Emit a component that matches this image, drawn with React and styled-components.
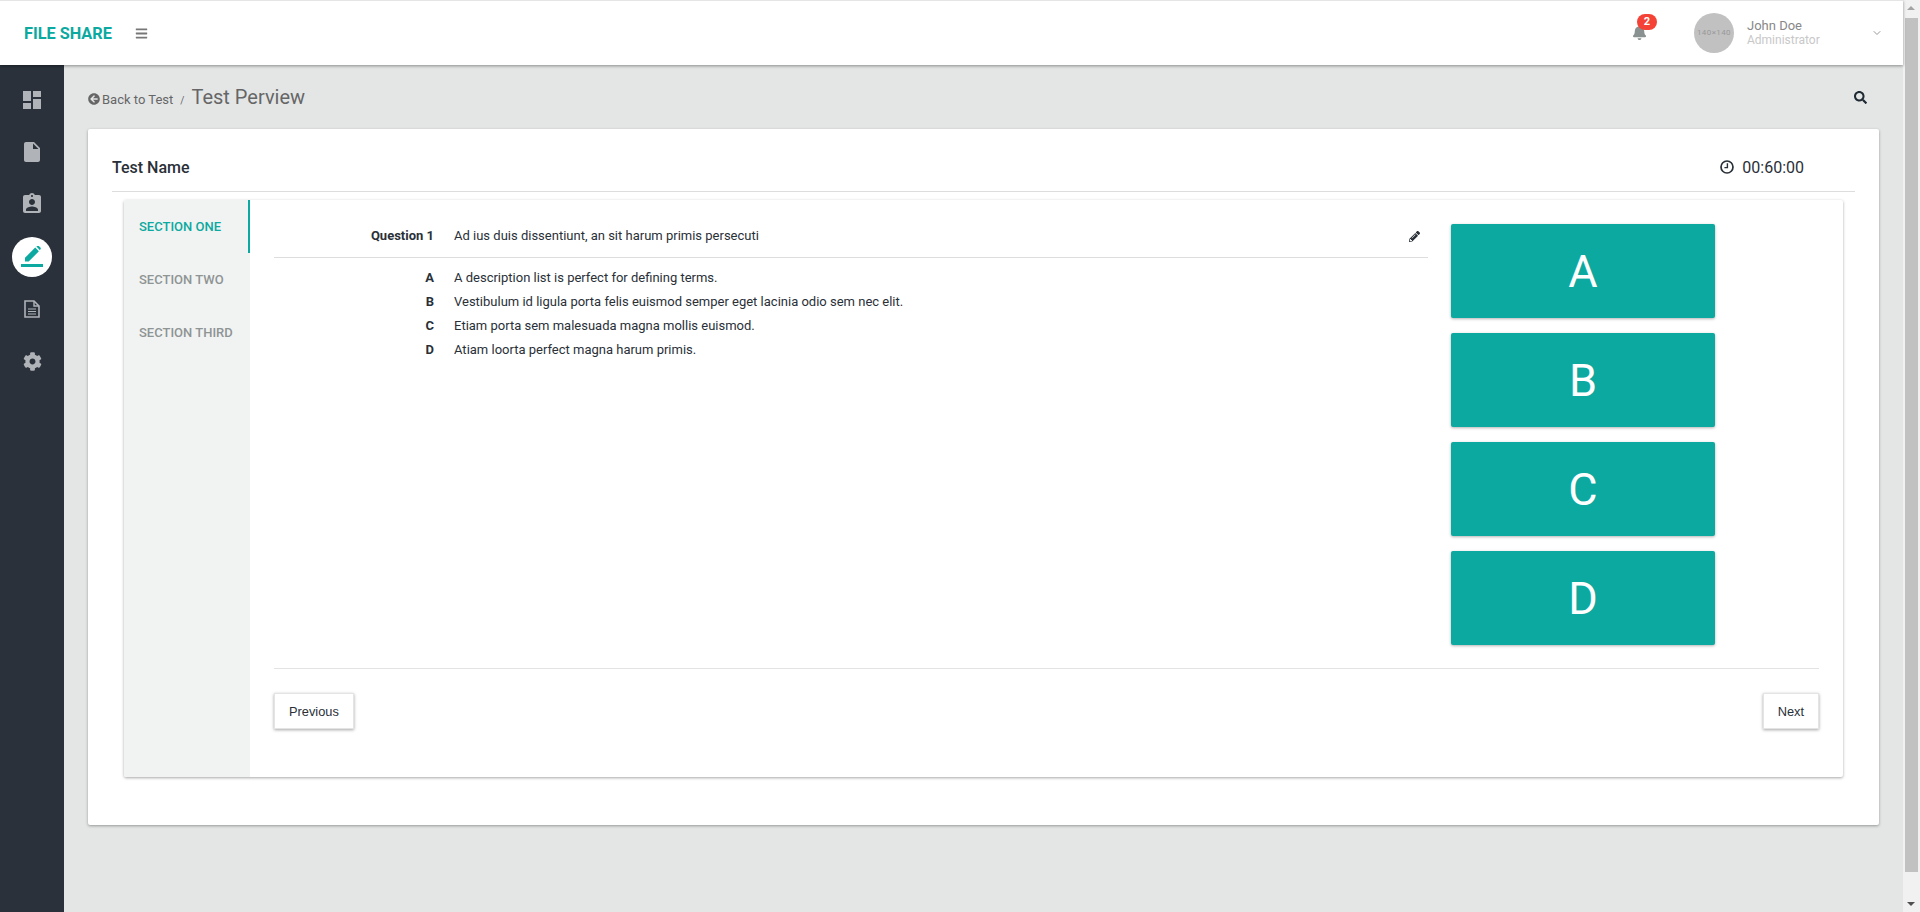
import React from 'react';
import styled, { createGlobalStyle } from 'styled-components';
import { FaArrowCircleLeft, FaBars, FaBell, FaCog, FaPencilAlt, FaSearch } from 'react-icons/fa';
import { MdAssignmentInd, MdDashboard, MdInsertDriveFile } from 'react-icons/md';
import { ChevronDown } from 'lucide-react';

const TEAL = '#0ba99f';

const GlobalStyle = createGlobalStyle`
  html, body {
    margin: 0;
    height: 100%;
    overflow: hidden;
  }
  body {
    font-family: Roboto, "Liberation Sans", sans-serif;
    color: #2a3038;
  }
`;

const Page = styled.div`
  display: flex;
  width: 1920px;
  height: 912px;
  background: #e4e6e6;
`;
const Viewport = styled.div`
  flex: 1;
  min-width: 0;
  display: flex;
  flex-direction: column;
`;

// header
const Header = styled.header`
  position: relative;
  z-index: 2;
  flex: none;
  height: 64px;
  display: flex;
  align-items: center;
  background: #fff;
  border-top: 1px solid #e4e6e6;
  box-shadow: 0 1px 3px rgba(0, 0, 0, 0.4);
`;
const Brand = styled.div`
  margin-left: 24px;
  color: ${TEAL};
  font-size: 16.3px;
  font-weight: 700;
`;
const MenuButton = styled.div`
  display: flex;
  margin-left: 23px;
  color: #777;
  font-size: 13px;
`;
const Notify = styled.div`
  position: relative;
  display: flex;
  margin-left: auto;
  margin-top: -1px;
  color: #899191;
  font-size: 15px;
`;
const Badge = styled.span`
  position: absolute;
  top: -11px;
  left: 5px;
  width: 20px;
  height: 16px;
  border-radius: 8px;
  background: #f44336;
  color: #fff;
  font-size: 11px;
  font-weight: 700;
  line-height: 16px;
  text-align: center;
`;
const Avatar = styled.div`
  width: 40px;
  height: 40px;
  margin-left: 47px;
  border-radius: 50%;
  background: #c1c1c1;
  color: #999;
  font-size: 8px;
  letter-spacing: 0.4px;
  line-height: 40px;
  text-align: center;
`;
const User = styled.div`
  margin-left: 13px;
  width: 124px;
  font-size: 13px;
  line-height: 14px;
  color: #888;
`;
const UserRole = styled.div`
  color: #c8c8c8;
  font-size: 12px;
`;
const Caret = styled.div`
  display: flex;
  margin-right: 20px;
  color: #999;
`;

// page body
const Body = styled.div`
  flex: 1;
  min-height: 0;
  display: flex;
`;
const SideNav = styled.nav`
  flex: none;
  width: 64px;
  padding-top: 9px;
  background: #2a313a;
`;
const NavItem = styled.div`
  height: 52.2px;
  display: flex;
  align-items: center;
  justify-content: center;
  color: #b0b3b8;
  font-size: 24px;
`;
const NavActive = styled.div`
  width: 40px;
  height: 40px;
  display: flex;
  align-items: center;
  justify-content: center;
  border-radius: 50%;
  background: #fff;
  color: ${TEAL};
`;
const Content = styled.main`
  flex: 1;
  min-width: 0;
  padding: 0 24px;
`;
const Crumbs = styled.div`
  height: 64px;
  display: flex;
  align-items: center;
  color: #666;
`;
const BackLink = styled.span`
  display: flex;
  align-items: center;
  gap: 2px;
  font-size: 13px;
  margin-top: 4px;
`;
const Slash = styled.span`
  margin: 6px 7px 0 7px;
  font-size: 10px;
`;
const CrumbTitle = styled.span`
  font-size: 20px;
`;
const SearchIcon = styled.span`
  display: flex;
  margin-left: auto;
  margin-right: 12px;
  color: #1f2a33;
  font-size: 13px;
`;

// outer card
const Card = styled.section`
  height: 696px;
  box-sizing: border-box;
  padding: 0 24px;
  background: #fff;
  border-radius: 2px;
  box-shadow: 0 1px 3px rgba(0, 0, 0, 0.35);
`;
const CardHead = styled.div`
  height: 63px;
  display: flex;
  align-items: center;
  padding-top: 14px;
  box-sizing: border-box;
  border-bottom: 1px solid #ddd;
`;
const TestName = styled.div`
  font-size: 16px;
  font-weight: 500;
`;
const Timer = styled.div`
  display: flex;
  align-items: center;
  gap: 8px;
  margin-left: auto;
  margin-right: 51px;
  font-size: 16px;
`;

// inner card
const Panel = styled.div`
  display: flex;
  height: 577px;
  margin: 8px 12px 0 12px;
  border-radius: 2px;
  overflow: hidden;
  box-shadow: 0 1px 3px rgba(0, 0, 0, 0.35);
`;
const Tabs = styled.div`
  flex: none;
  width: 126px;
  background: #f1f3f3;
`;
const Tab = styled.div`
  height: 53px;
  box-sizing: border-box;
  padding-left: 15px;
  display: flex;
  align-items: center;
  font-size: 13px;
  font-weight: 500;
  color: ${(p) => (p.$active ? TEAL : '#8f9494')};
  border-right: 2px solid ${(p) => (p.$active ? TEAL : 'transparent')};
`;
const PanelBody = styled.div`
  flex: 1;
  min-width: 0;
  padding: 24px 24px 0 24px;
`;
const QuestionArea = styled.div`
  display: flex;
  gap: 23px;
  height: 444px;
  border-bottom: 1px solid #e2e4e4;
`;
const Question = styled.div`
  width: 1154px;
`;
const QuestionHead = styled.div`
  display: grid;
  grid-template-columns: 160px 1fr 16px;
  column-gap: 20px;
  align-items: start;
  height: 33px;
  line-height: 24px;
  border-bottom: 1px solid #ddd;
  font-size: 13px;
`;
const Label = styled.div`
  text-align: right;
  font-weight: 700;
`;
const EditIcon = styled.span`
  display: flex;
  height: 24px;
  align-items: center;
  font-size: 11px;
  margin-left: -3px;
`;
const Options = styled.div`
  display: grid;
  grid-template-columns: 160px 1fr;
  column-gap: 20px;
  grid-auto-rows: 24px;
  align-items: center;
  padding-top: 7px;
  font-size: 13px;
`;
const Answers = styled.div`
  display: flex;
  flex-direction: column;
  gap: 15px;
  width: 264px;
`;
const Answer = styled.div`
  height: 94px;
  display: flex;
  align-items: center;
  justify-content: center;
  border-radius: 2px;
  background: ${TEAL};
  color: #fff;
  font-size: 45px;
  box-shadow: 0 1px 3px rgba(0, 0, 0, 0.3);
`;
const Pager = styled.div`
  display: flex;
  justify-content: space-between;
  margin-top: 24px;
`;
const PagerButton = styled.button`
  height: 36px;
  padding: 0 14px;
  border: 1px solid #e4e4e4;
  background: #fff;
  color: #2a3038;
  font-family: "Liberation Sans", Arial, sans-serif;
  font-size: 12.8px;
  box-shadow: 0 1px 3px rgba(0, 0, 0, 0.35);
`;

// browser scrollbar
const ScrollTrack = styled.div`
  flex: none;
  position: relative;
  width: 17px;
  background: #f1f1f1;
`;
const ScrollThumb = styled.div`
  position: absolute;
  top: 18px;
  left: 2px;
  width: 13px;
  height: 854px;
  background: #c1c1c1;
`;
const ScrollArrow = styled.div`
  position: absolute;
  left: 4px;
  ${(p) => (p.$down ? 'bottom: 6px;' : 'top: 6px;')}
  width: 0;
  height: 0;
  border-left: 4px solid transparent;
  border-right: 4px solid transparent;
  ${(p) => (p.$down ? 'border-top: 4px solid #505050;' : 'border-bottom: 4px solid #a3a3a3;')}
`;

// drawn icons, the packages have no close match for these
const EditLineIcon = () => (
  <svg width="22" height="22" viewBox="0 0 22 22" fill="currentColor">
    <rect x="0" y="18" width="22" height="3" />
    <path d="M4 15.5V11.8L14.2 1.6L17.9 5.3L7.7 15.5Z" />
    <path d="M15.4 0.6L16.4 -0.2Q17 -0.6 17.6 -0.2L19.6 1.8Q20 2.4 19.6 3L18.9 4.2Z" />
  </svg>
);
const FileLinesIcon = () => (
  <svg width="16" height="18" viewBox="0 0 16 18" fill="none" stroke="currentColor">
    <path d="M1 1H10L15 6V17H1Z" strokeWidth="1.6" />
    <path d="M10 1V6H15" strokeWidth="1.4" />
    <path d="M4 9H12M4 11.5H12M4 14H12" strokeWidth="1.2" />
  </svg>
);
const ClockIcon = () => (
  <svg width="14" height="14" viewBox="0 0 14 14" fill="none" stroke="currentColor">
    <circle cx="7" cy="7" r="6" strokeWidth="1.7" />
    <path d="M7.4 3.2V7.6H4.4" strokeWidth="1.4" />
  </svg>
);

const options = [
  ['A', 'A description list is perfect for defining terms.'],
  ['B', 'Vestibulum id ligula porta felis euismod semper eget lacinia odio sem nec elit.'],
  ['C', 'Etiam porta sem malesuada magna mollis euismod.'],
  ['D', 'Atiam loorta perfect magna harum primis.'],
];

const App = () => (
  <>
    <GlobalStyle />
    <Page>
      <Viewport>
        <Header>
          <Brand>FILE SHARE</Brand>
          <MenuButton><FaBars /></MenuButton>
          <Notify>
            <FaBell />
            <Badge>2</Badge>
          </Notify>
          <Avatar>140×140</Avatar>
          <User>
            John Doe
            <UserRole>Administrator</UserRole>
          </User>
          <Caret><ChevronDown size={12} /></Caret>
        </Header>
        <Body>
          <SideNav>
            <NavItem><MdDashboard /></NavItem>
            <NavItem><MdInsertDriveFile /></NavItem>
            <NavItem><MdAssignmentInd /></NavItem>
            <NavItem><NavActive><EditLineIcon /></NavActive></NavItem>
            <NavItem><FileLinesIcon /></NavItem>
            <NavItem><FaCog size={19} /></NavItem>
          </SideNav>
          <Content>
            <Crumbs>
              <BackLink><FaArrowCircleLeft size={12} />Back to Test</BackLink>
              <Slash>/</Slash>
              <CrumbTitle>Test Perview</CrumbTitle>
              <SearchIcon><FaSearch /></SearchIcon>
            </Crumbs>
            <Card>
              <CardHead>
                <TestName>Test Name</TestName>
                <Timer><ClockIcon />00:60:00</Timer>
              </CardHead>
              <Panel>
                <Tabs>
                  <Tab $active>SECTION ONE</Tab>
                  <Tab>SECTION TWO</Tab>
                  <Tab>SECTION THIRD</Tab>
                </Tabs>
                <PanelBody>
                  <QuestionArea>
                    <Question>
                      <QuestionHead>
                        <Label>Question 1</Label>
                        <div>Ad ius duis dissentiunt, an sit harum primis persecuti</div>
                        <EditIcon><FaPencilAlt /></EditIcon>
                      </QuestionHead>
                      <Options>
                        {options.map(([letter, text]) => (
                          <React.Fragment key={letter}>
                            <Label>{letter}</Label>
                            <div>{text}</div>
                          </React.Fragment>
                        ))}
                      </Options>
                    </Question>
                    <Answers>
                      {options.map(([letter]) => (
                        <Answer key={letter}>{letter}</Answer>
                      ))}
                    </Answers>
                  </QuestionArea>
                  <Pager>
                    <PagerButton>Previous</PagerButton>
                    <PagerButton>Next</PagerButton>
                  </Pager>
                </PanelBody>
              </Panel>
            </Card>
          </Content>
        </Body>
      </Viewport>
      <ScrollTrack>
        <ScrollArrow />
        <ScrollThumb />
        <ScrollArrow $down />
      </ScrollTrack>
    </Page>
  </>
);

export default App;
